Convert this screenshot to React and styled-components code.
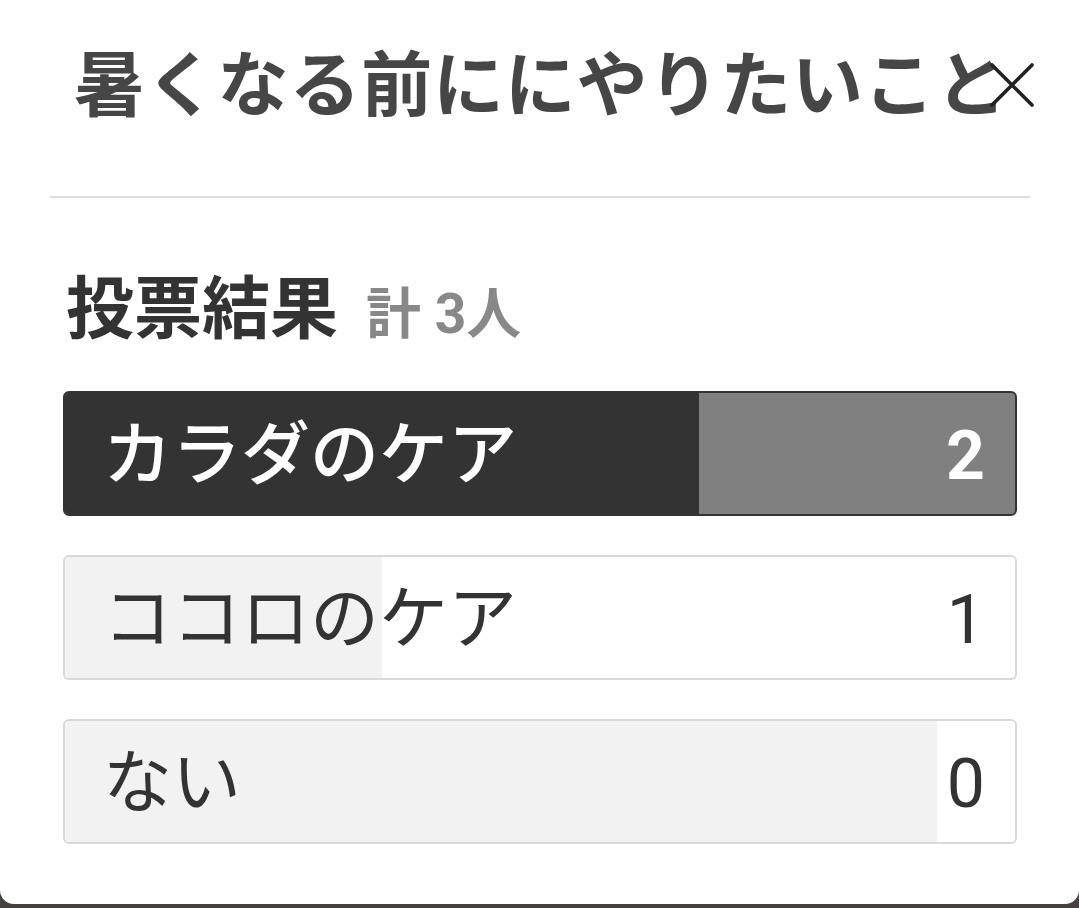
import React from 'react'
import styled, { createGlobalStyle } from 'styled-components'

const GlobalStyle = createGlobalStyle`
  html, body {
    margin: 0;
    padding: 0;
    background: #46413c;
  }
  body {
    font-family: Roboto, "Noto Sans CJK JP", sans-serif;
  }
`;

const results = [
  { label: 'カラダのケア', count: 2, fill: 66.7, top: true },
  { label: 'ココロのケア', count: 1, fill: 33.4 },
  { label: 'ない', count: 0, fill: 91.8 },
];

const App = () => {
  const total = results.reduce((s, r) => s + r.count, 0);

  return (
    <>
      <GlobalStyle />
      <Card>
        <Header>
          <Title>暑くなる前ににやりたいこと</Title>
          <CloseBtn type="button" aria-label="close">
            <svg width="44" height="44" viewBox="0 0 44 44">
              <path d="M2 2 L42 42 M42 2 L2 42" stroke="#222" strokeWidth="3.6" strokeLinecap="round" fill="none" />
            </svg>
          </CloseBtn>
        </Header>
        <Divider />
        <ResultHead>
          投票結果<Total>計 {total}人</Total>
        </ResultHead>
        <BarList>
          {results.map((r) => (
            <Bar key={r.label} $top={r.top}>
              <BarFill $top={r.top} style={{ width: `${r.fill}%` }} />
              <BarLabel $top={r.top}>{r.label}</BarLabel>
              <BarCount $top={r.top}>{r.count}</BarCount>
            </Bar>
          ))}
        </BarList>
      </Card>
    </>
  );
};

const Card = styled.div`
  background: #ffffff;
  height: 904px;
  border-radius: 0 0 14px 14px;
  overflow: hidden;
  box-sizing: border-box;
`;
const Header = styled.div`
  position: relative;
  padding: 34px 0 0 74px;
`;
const Title = styled.h1`
  margin: 0;
  font-family: "Noto Sans CJK JP", sans-serif;
  font-weight: 700;
  font-size: 71px;
  line-height: 90px;
  color: #464646;
  white-space: nowrap;
  letter-spacing: 0.8px;
`;
const CloseBtn = styled.button`
  position: absolute;
  top: 62px;
  left: 989px;
  width: 46px;
  height: 46px;
  padding: 1px;
  border: none;
  background: transparent;
  cursor: pointer;
  svg { display: block; }
`;
const Divider = styled.hr`
  margin: 72px 49px 0 50px;
  border: none;
  border-top: 2px solid #dcdcdc;
  height: 0;
`;
const ResultHead = styled.h2`
  margin: 66px 0 0 66px;
  font-family: "Noto Sans CJK JP", sans-serif;
  font-weight: 700;
  font-size: 68px;
  line-height: 80px;
  color: #333333;
  display: flex;
  align-items: baseline;
`;
const Total = styled.span`
  margin-left: 28px;
  font-family: Roboto, "Noto Sans CJK JP", sans-serif;
  font-size: 55px;
  font-weight: 700;
  color: #888888;
`;
const BarList = styled.div`
  margin: 37px 62px 0 63px;
  display: flex;
  flex-direction: column;
  gap: 39px;
`;
const Bar = styled.div`
  position: relative;
  height: 125px;
  box-sizing: border-box;
  border: 2px solid ${(p) => (p.$top ? '#333333' : '#d9d9d9')};
  border-radius: 6px;
  background: ${(p) => (p.$top ? '#808080' : '#ffffff')};
  overflow: hidden;
  display: flex;
  align-items: center;
  justify-content: space-between;
  padding: 4px 30px 0 38px;
`;
const BarFill = styled.div`
  position: absolute;
  left: 0;
  top: 0;
  bottom: 0;
  background: ${(p) => (p.$top ? '#333333' : '#f2f2f2')};
`;
const BarLabel = styled.span`
  position: relative;
  font-family: Roboto, "Noto Sans CJK JP", sans-serif;
  font-size: 69px;
  font-weight: ${(p) => (p.$top ? 500 : 400)};
  color: ${(p) => (p.$top ? '#ffffff' : '#333333')};
  line-height: 1;
`;
const BarCount = styled.span`
  position: relative;
  font-family: Roboto, sans-serif;
  font-size: 68px;
  font-weight: ${(p) => (p.$top ? 700 : 400)};
  color: ${(p) => (p.$top ? '#ffffff' : '#333333')};
  line-height: 1;
`;

export default App
